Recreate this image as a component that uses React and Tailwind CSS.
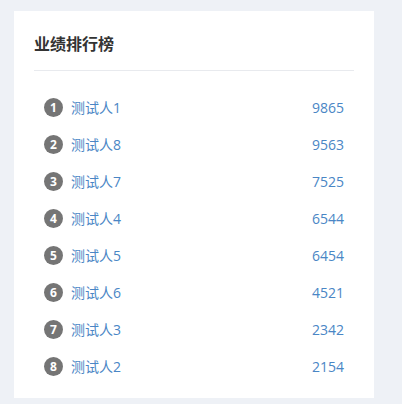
const rows = [
  ["测试人1", 9865],
  ["测试人8", 9563],
  ["测试人7", 7525],
  ["测试人4", 6544],
  ["测试人5", 6454],
  ["测试人6", 4521],
  ["测试人3", 2342],
  ["测试人2", 2154],
];

export default function App() {
  return (
    <div
      className="w-[402px] h-[404px] bg-[#eef1f6] pt-[11px] pl-[14px]"
      style={{ fontFamily: '"Open Sans", "Noto Sans CJK SC", sans-serif' }}
    >
      <div className="w-[360px] h-[387px] bg-white px-5">
        <div className="pt-[21px] pb-[14px] border-b border-[#e8eaee]">
          <h2 className="text-[16px] leading-6 font-bold text-[#333]">业绩排行榜</h2>
        </div>
        <ul className="mt-[18px] px-2.5">
          {rows.map(([name, score], i) => (
            <li key={name} className="h-[37px] flex items-center justify-between">
              <div className="flex items-center gap-2">
                <span className="w-[19px] h-[19px] rounded-full bg-[#757575] text-white text-[12px] font-bold flex items-center justify-center leading-none">
                  {i + 1}
                </span>
                <span className="text-[14px] text-[#4a86c5]">{name}</span>
              </div>
              <span className="text-[14px] text-[#4a86c5]">{score}</span>
            </li>
          ))}
        </ul>
      </div>
    </div>
  );
}
